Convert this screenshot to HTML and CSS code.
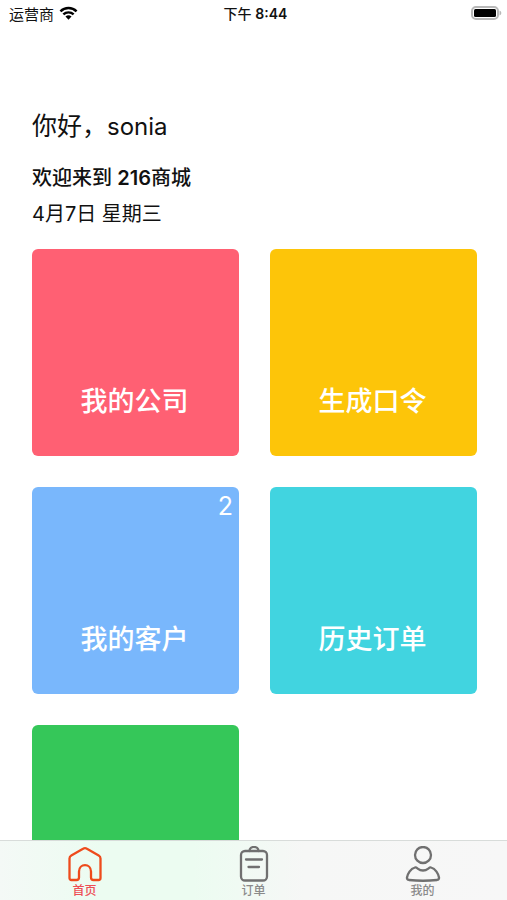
FILE: index.html
```html
<!DOCTYPE html>
<html lang="zh-CN">
<head>
    <meta charset="UTF-8">
    <meta name="viewport" content="width=device-width, initial-scale=1.0">
    <title>216商城</title>
    <link rel="stylesheet" href="styles.css">
</head>
<body>
    <div class="app">
        <header class="status-bar">
            <div class="carrier">
                <span>运营商</span>
                <svg class="wifi" viewBox="0 0 20 14" aria-hidden="true">
                    <path d="M1.5 5.2a12.2 12.2 0 0 1 17 0M4.6 8.5a7.8 7.8 0 0 1 10.8 0" fill="none" stroke="#000" stroke-width="2.6"/>
                    <path d="M10 14l-3.200-3.200a4.600 4.600 0 0 1 6.400 0z"/>
                </svg>
            </div>
            <div class="time">下午 <strong>8:44</strong></div>
            <div class="power">
                <svg class="battery" viewBox="0 0 32 14" aria-hidden="true">
                    <rect x="2" y="1" width="26" height="12" rx="4" fill="#fff" stroke="#b8b8b8" stroke-width="2"/>
                    <rect x="4" y="3" width="22" height="8" rx="1.500"/>
                    <path d="M29.500 4.500c2.400 1 2.400 4 0 5z" fill="#b8b8b8"/>
                </svg>
            </div>
        </header>

        <main class="content">
            <h1 class="hello">你好，<span class="name">sonia</span></h1>
            <h2 class="welcome">欢迎来到 <strong>216</strong>商城</h2>
            <p class="date">4月7日 星期三</p>

            <div class="grid">
                <button type="button" class="tile tile-red">我的公司</button>
                <button type="button" class="tile tile-yellow">生成口令</button>
                <button type="button" class="tile tile-blue">我的客户<span class="badge">2</span></button>
                <button type="button" class="tile tile-cyan">历史订单</button>
                <button type="button" class="tile tile-green" aria-label="更多"></button>
            </div>
        </main>

        <nav class="tab-bar">
            <a href="#home" class="tab active">
                <svg class="tab-icon" viewBox="0 0 36 36" aria-hidden="true">
                    <path d="M4.500 34Q2.500 34 2.500 32V12.500Q2.500 10.500 4.300 9.500L16.500 2.600Q18 1.700 19.500 2.600L31.700 9.500Q33.500 10.500 33.500 12.500V32Q33.500 34 31.500 34H26.500Q24 34 24 31.500V25.500C24 17 12 17 12 25.500V31.500Q12 34 9.500 34Z"/>
                </svg>
                <span>首页</span>
            </a>
            <a href="#orders" class="tab">
                <svg class="tab-icon" viewBox="0 0 36 36" aria-hidden="true">
                    <rect x="5" y="5" width="26" height="29.500" rx="4"/>
                    <path d="M13.500 5C13.500 -0.400 22.500 -0.400 22.500 5M10 13.500H26M12.500 21H23"/>
                </svg>
                <span>订单</span>
            </a>
            <a href="#mine" class="tab">
                <svg class="tab-icon" viewBox="0 0 36 36" aria-hidden="true">
                    <circle cx="18" cy="9" r="8"/>
                    <path d="M10 21.500C5.500 22.500 2.500 28 2 31.500Q1.700 33.500 4 34Q18 35.500 32 34Q34.300 33.500 34 31.500C33.500 28 30.500 22.500 26 21.500C23.500 21 23 24.500 18 24.500C13 24.500 12.500 21 10 21.500Z"/>
                </svg>
                <span>我的</span>
            </a>
        </nav>
    </div>
</body>
</html>
```

FILE: styles.css
```css
* {
    box-sizing: border-box;
}
body {
    margin: 0;
    background-color: #fff;
    color: #111;
    font-family: Inter, "Noto Sans CJK SC", sans-serif;
}
strong {
    font-weight: 600;
}
.app {
    display: flex;
    flex-direction: column;
    height: 100vh;
}

/* status bar */
.status-bar {
    display: flex;
    align-items: center;
    flex: none;
    height: 26px;
    padding: 0 5px 0 9px;
    font-size: 15px;
}
.carrier,
.power {
    display: flex;
    flex: 1;
    align-items: center;
    gap: 5px;
}
.power {
    justify-content: flex-end;
}
.wifi {
    width: 19px;
    height: 14px;
}
.battery {
    width: 32px;
    height: 14px;
}
.time {
    font-size: 14px;
    font-weight: 500;
}

/* page content */
.content {
    flex: 1;
    min-height: 0;
    padding: 82px 30px 0 32px;
    overflow-y: auto;
    scrollbar-width: none;
}
.hello {
    margin: 0;
    font-size: 25px;
    font-weight: 400;
    line-height: 36px;
}
.name {
    font-size: 24px;
}
.welcome {
    margin: 15px 0 0;
    font-size: 20px;
    font-weight: 500;
    line-height: 36px;
}
.date {
    margin: 0;
    font-size: 20px;
    line-height: 36px;
}
.grid {
    display: grid;
    grid-template-columns: 1fr 1fr;
    gap: 31px;
    margin-top: 17px;
}
.tile {
    position: relative;
    display: flex;
    align-items: flex-end;
    justify-content: center;
    aspect-ratio: 1;
    padding: 0 2px 36px 0;
    border: none;
    border-radius: 6px;
    color: #fff;
    font-family: inherit;
    font-size: 27px;
    font-weight: 500;
    line-height: 36px;
    cursor: pointer;
}
.tile-red {
    background-color: #ff6073;
}
.tile-yellow {
    background-color: #fdc509;
}
.tile-blue {
    background-color: #79b7fc;
}
.tile-cyan {
    background-color: #41d4e0;
}
.tile-green {
    background-color: #35c759;
}
.badge {
    position: absolute;
    top: 1px;
    right: 6px;
    font-size: 25px;
    font-weight: 400;
}

/* bottom tabs */
.tab-bar {
    display: flex;
    flex: none;
    height: 60px;
    border-top: 1px solid #d8dcda;
    background: linear-gradient(to right, #f4f9f6, #ecfcf1 20%, #ecfcf1 38%, #f6f7f6 60%, #f7f7f7);
}
.tab {
    display: flex;
    flex: 1;
    flex-direction: column;
    align-items: center;
    padding-top: 5px;
    color: #8a8a8a;
    font-size: 12px;
    font-weight: 500;
    line-height: 18px;
    text-decoration: none;
}
.tab-icon {
    width: 36px;
    height: 36px;
    fill: none;
    stroke: #707070;
    stroke-width: 2.3;
    stroke-linecap: round;
    stroke-linejoin: round;
}
.tab.active {
    color: #ee4d55;
}
.tab.active .tab-icon {
    stroke: #ee4b1c;
}
```
